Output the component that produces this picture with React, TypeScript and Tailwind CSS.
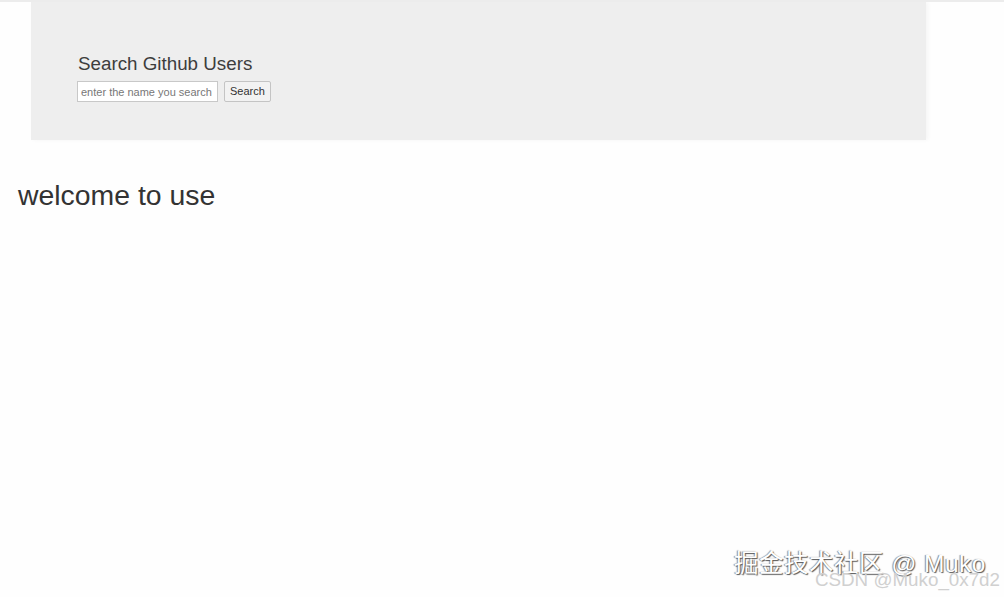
import React, { useState } from "react";

const App = () => {
  const [keyword, setKeyword] = useState("");

  return (
    <div
      className="relative w-[1004px] h-[597px] overflow-hidden bg-[#fefefe] border-t-2 border-[#ececec] text-[#333]"
      style={{ fontFamily: '"Liberation Sans", Arial, sans-serif' }}
    >
      <section className="ml-[31px] w-[895px] h-[138px] bg-[#eeeeee] pl-[46px] pt-[51px] shadow-[2px_0_4px_rgba(0,0,0,0.04)]">
        <h3 className="ml-[1px] text-[18.8px] leading-[22px] text-[#3d3d3d]">Search Github Users</h3>
        <div className="mt-[6px] flex items-center gap-[6px]">
          <input
            type="text"
            value={keyword}
            onChange={(e) => setKeyword(e.target.value)}
            placeholder="enter the name you search"
            className="w-[141px] h-[21px] bg-white border border-[#c8c8c8] px-[3px] text-[11px] placeholder:text-[#777] outline-none"
          />
          <button className="h-[21px] px-[5px] bg-[#f2f2f2] border border-[#c4c4c4] rounded-[2px] text-[11px] text-[#333]">
            Search
          </button>
        </div>
      </section>

      <h1 className="mt-[39px] ml-[18px] text-[28.4px] leading-[32px] text-[#333]">welcome to use</h1>

      {/* watermarks */}
      <div
        className="absolute right-[18px] bottom-[19px] text-[24.5px] leading-[28px] text-white tracking-[0.5px] [text-shadow:1px_1px_1px_#555,-1px_0_1px_#888]"
        style={{ fontFamily: '"Liberation Sans", "Noto Sans CJK SC", sans-serif' }}
      >
        掘金技术社区 @ Muko
      </div>
      <div className="absolute right-[4px] bottom-[6px] text-[18.8px] leading-[22px] text-[#d0d0d0]">
        CSDN @Muko_0x7d2
      </div>
    </div>
  );
};

export default App;
